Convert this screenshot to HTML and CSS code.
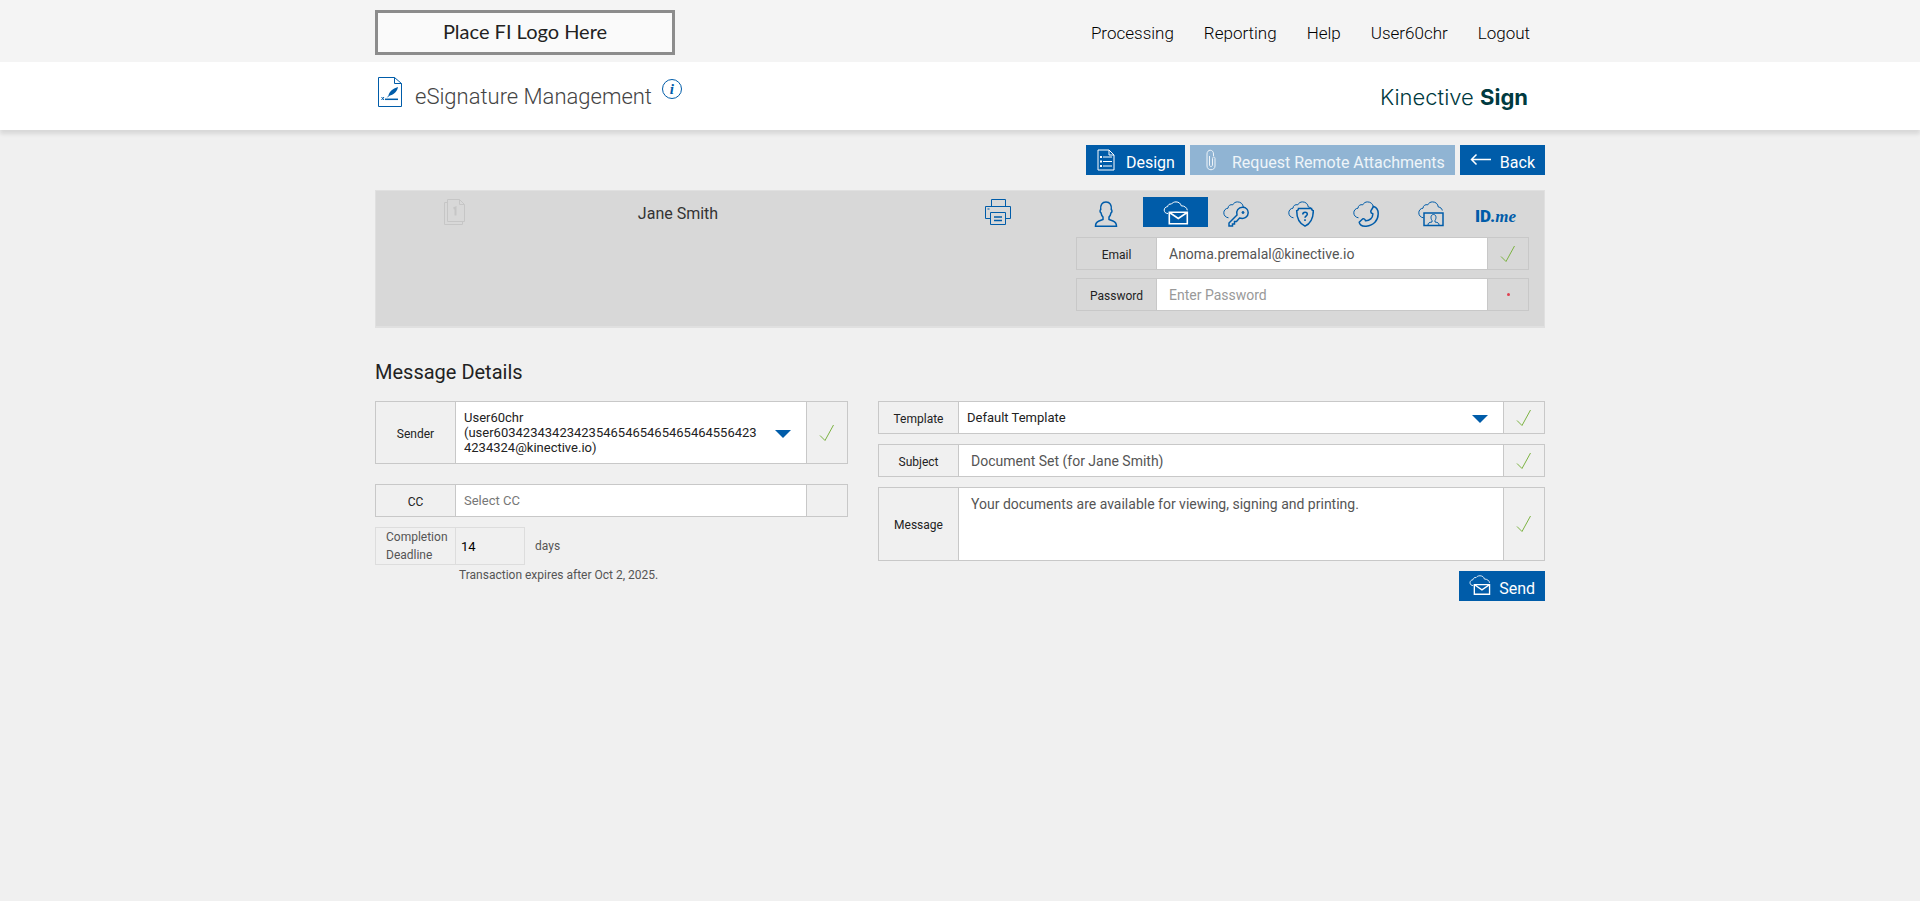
FILE: index.html
```html
<!DOCTYPE html>
<html lang="en">

<head>
  <meta charset="UTF-8">
  <meta name="viewport" content="width=device-width, initial-scale=1.0">
  <title>eSignature Management</title>
  <link rel="stylesheet" href="styles.css">
</head>

<body>
  <!-- Shared icons -->
  <svg class="icon-defs" aria-hidden="true">
    <symbol id="icon-cloud" viewBox="0 0 26 26">
      <path d="M5.500 16.800C2.800 16.500.8 14.500.8 11.800c0-2.500 1.800-4.400 4.200-4.600C5.200 4.500 7.300 3.200 9.800 3.800 10.800 1.800 12.500.9 14.500.9c3.200 0 5.400 2 5.800 5.100 2.300.3 3.600 1.500 4 3.500" />
    </symbol>
    <symbol id="icon-mail" viewBox="0 0 26 26">
      <path d="M5 12.500C2.800 12.500 1.200 11.200 1.200 9.200c0-2 1.400-3.400 3.500-3.600C5 3.500 6.500 2.700 8.300 3.100 9.500 1.600 11 .9 13 .9c2.700 0 4.700 1.500 5.200 3.900C21.400 4.800 24 6.500 24.300 9.300" />
      <path stroke-width="1.600" d="M6.300 11.300h18v11.400h-18zM6.500 11.500l8.800 6 8.800-6" />
    </symbol>
    <symbol id="icon-check" viewBox="0 0 16 18">
      <path d="M1 11.500l5 5L14.500 1" />
    </symbol>
  </svg>

  <header class="top-bar">
    <div class="container top-inner">
      <div class="fi-logo">Place FI Logo Here</div>
      <nav class="main-nav">
        <a href="#">Processing</a>
        <a href="#">Reporting</a>
        <a href="#">Help</a>
        <a href="#">User60chr</a>
        <a href="#">Logout</a>
      </nav>
    </div>
  </header>

  <div class="title-bar">
    <div class="container title-inner">
      <svg class="title-icon" viewBox="0 0 24 30">
        <path d="M.5.500h16l7 6v23H.5zM16.500.500v6h7" />
        <path d="M3.500 20l2.500 3M6 20l-2.500 3" />
        <path stroke-width="1.500" d="M7 22.300h13" />
        <path class="feather" d="M10.500 18.500C11 15 14.500 11.500 20 10c-.5 3.500-3.500 7.500-8 8.500L8.500 21z" />
      </svg>
      <h1>eSignature Management</h1>
      <a class="info-link" href="#" aria-label="Information">i</a>
      <div class="brand">Kinective <strong>Sign</strong></div>
    </div>
  </div>

  <main class="container">
    <div class="actions">
      <button class="btn" type="button">
        <svg class="btn-icon design-icon" viewBox="0 0 18 22">
          <path d="M1 1h11l5 5v15H1zM12 1v5h5M6 8h9M6 12.500h9M6 17h9" />
          <path stroke-width="2" d="M3 8h2M3 12.500h2M3 17h2" />
        </svg>
        Design
      </button>
      <button class="btn" type="button" disabled>
        <svg class="btn-icon clip-icon" viewBox="0 0 10 22">
          <path d="M3.500 7v9c0 2 3 2 3 0V9.500c0-2 2.500-2 2.500 0V17c0 5-8 5-8 0V5c0-5 6.500-5 6.500 0v2" />
        </svg>
        Request Remote Attachments
      </button>
      <button class="btn btn-compact" type="button">
        <svg class="btn-icon back-icon" viewBox="0 0 22 22">
          <path stroke-width="1.500" d="M21 10.500H1.500M6.500 5.500l-5 5 5 5" />
        </svg>
        Back
      </button>
    </div>

    <section class="signer-panel">
      <div class="cell doc-cell">
        <svg class="doc-icon" viewBox="0 0 22 26">
          <path d="M3.500.500h12l5 5v17h-17zM15.500.500v5h5M3.500 3.500h-3v22h18v-3" />
          <path stroke-width="2" d="M9.500 9.500l2-1v8" />
        </svg>
      </div>
      <div class="cell signer-name">Jane Smith</div>
      <div class="cell print-cell">
        <button class="icon-btn" type="button" aria-label="Print">
          <svg class="icon" viewBox="0 0 26 26">
            <path d="M6.500 7.500v-7h14v7M5.500 19.500h-5v-12h25v12h-5M5.500 13.500h15v12h-15z" />
            <path stroke-width="1.500" d="M9 18h8M9 21.500h8" />
            <path d="M2.500 10h2" />
          </svg>
        </button>
      </div>
      <div class="auth">
        <div class="auth-tabs">
          <button class="tab" type="button" aria-label="In person">
            <svg class="icon" viewBox="0 0 26 26">
              <path stroke-width="1.500" d="M2.500 25.200h21c0-3.200-.8-4.200-3.500-5.200l-4-1.500v-2.500c1.200-1.200 1.700-2.500 2-4.200 1.200-.6 1.200-2.800.3-3.200C18.800 4 17 1 13 1S7.200 4 7.700 8.600c-.9.400-.9 2.600.3 3.200.3 1.700.8 3 2 4.200v2.500L6 20c-2.700 1-3.500 2-3.500 5.200z" />
            </svg>
          </button>
          <button class="tab active" type="button" aria-label="Email">
            <svg class="icon"><use href="#icon-mail" /></svg>
          </button>
          <button class="tab" type="button" aria-label="Password">
            <svg class="icon" viewBox="0 0 26 26">
              <use href="#icon-cloud" />
              <path class="masked" stroke-width="1.500" d="M14 14L6 22v3h3.500v-2h2v-2.500h2l3-3.500c5 1.500 8.700-1.200 8.700-5.200 0-3.500-2.500-5.500-5.700-5.500-4.200 0-6.800 3.700-5.500 7.700z" />
              <circle class="solid" cx="20" cy="11.500" r="1" />
            </svg>
          </button>
          <button class="tab" type="button" aria-label="Security question">
            <svg class="icon" viewBox="0 0 26 26">
              <use href="#icon-cloud" />
              <path class="masked" stroke-width="1.500" d="M10.500 7.500h13c0 1.300.7 2 1.800 2.200 0 7.500-1.800 12.300-8.300 15.500-6.500-3.200-8.300-8-8.300-15.500 1.100-.2 1.800-.9 1.800-2.200z" />
              <path stroke-width="1.600" d="M14.800 13.500c0-3 4.500-3 4.500-.3 0 1.600-2.300 1.600-2.300 3.600M17 18.300v1.800" />
            </svg>
          </button>
          <button class="tab" type="button" aria-label="Phone">
            <svg class="icon" viewBox="0 0 26 26">
              <use href="#icon-cloud" />
              <path class="masked" stroke-width="1.500" d="M20.500 5.500c3.500 1 4.800 3.500 4.700 7.500-.2 6.500-4.500 11.500-12 12.200-4 .3-6.500-.7-7-4L9.500 18c1.500-.8 2.500.2 3 1.800 4 .2 7.500-3 7.300-7-1.600-.6-2.300-1.800-1.800-3.200z" />
            </svg>
          </button>
          <button class="tab" type="button" aria-label="Identification">
            <svg class="icon" viewBox="0 0 26 26">
              <use href="#icon-cloud" />
              <path class="masked" stroke-width="1.500" d="M6 12h19v12.500H6z" />
              <path d="M10 24c0-2 1-2.500 4-3v-1.500c-1.500-2-1.500-6 1.500-6s3 4 1.500 6V21c3 .5 4 1 4 3" />
            </svg>
          </button>
          <button class="tab" type="button" aria-label="ID.me">
            <span class="idme">ID.<em>me</em></span>
          </button>
        </div>
        <div class="field">
          <label for="email">Email</label>
          <input id="email" type="text" value="Anoma.premalal@kinective.io">
          <span class="status"><svg class="check"><use href="#icon-check" /></svg></span>
        </div>
        <div class="field">
          <label for="password">Password</label>
          <input id="password" type="password" placeholder="Enter Password">
          <span class="status"><span class="required-dot"></span></span>
        </div>
      </div>
    </section>

    <h2>Message Details</h2>

    <form class="details">
      <div class="details-left">
        <div class="field sender-field">
          <label for="sender">Sender</label>
          <div class="select-wrap">
            <select id="sender">
              <option>User60chr (user6034234342342354654654654654645564234234324@kinective.io)</option>
            </select>
          </div>
          <span class="status"><svg class="check"><use href="#icon-check" /></svg></span>
        </div>
        <div class="field cc-field">
          <label for="cc">CC</label>
          <input id="cc" type="text" placeholder="Select CC">
          <span class="status"></span>
        </div>
        <div class="deadline">
          <div class="deadline-box">
            <label for="days">Completion Deadline</label>
            <input id="days" type="text" value="14">
          </div>
          <span>days</span>
        </div>
        <p class="expires">Transaction expires after Oct 2, 2025.</p>
      </div>

      <div class="details-right">
        <div class="field">
          <label for="template">Template</label>
          <div class="select-wrap">
            <select id="template">
              <option>Default Template</option>
            </select>
          </div>
          <span class="status"><svg class="check"><use href="#icon-check" /></svg></span>
        </div>
        <div class="field">
          <label for="subject">Subject</label>
          <input id="subject" type="text" value="Document Set (for Jane Smith)">
          <span class="status"><svg class="check"><use href="#icon-check" /></svg></span>
        </div>
        <div class="field message-field">
          <label for="message">Message</label>
          <textarea id="message">Your documents are available for viewing, signing and printing.</textarea>
          <span class="status"><svg class="check"><use href="#icon-check" /></svg></span>
        </div>
        <button class="btn btn-compact send-btn" type="button">
          <svg class="btn-icon send-icon"><use href="#icon-mail" /></svg>
          Send
        </button>
      </div>
    </form>
  </main>
</body>

</html>
```

FILE: styles.css
```css
:root {
  --primary: #005ca9;
  --background: #f0f0f0;
  --panel: #d8d8d8;
  --border: #c8c8c8;
  --text: #222;
  --text-secondary: #555;
  --brand: #003a40;
  --success: #7cb342;
}

* {
  box-sizing: border-box;
  margin: 0;
  padding: 0;
}

body {
  font-family: Roboto, "Liberation Sans", sans-serif;
  font-size: 14px;
  line-height: 20px;
  background: var(--background);
  color: var(--text);
}

button,
input,
select,
textarea {
  font-family: inherit;
}

svg {
  fill: none;
  stroke: currentColor;
}

.solid,
.feather {
  fill: currentColor;
}

.feather {
  stroke: none;
}

.icon-defs {
  display: none;
}

.container {
  max-width: 1170px;
  margin: 0 auto;
}

/* Header */
.top-bar {
  background: #f4f4f4;
}

.top-inner {
  display: flex;
  align-items: center;
  justify-content: space-between;
  padding: 10px 0 7px;
}

.fi-logo {
  width: 300px;
  height: 45px;
  border: 3px solid #8c8c8c;
  background: #fafafa;
  color: #222;
  font-family: Lato, sans-serif;
  font-size: 20px;
  line-height: 36px;
  text-align: center;
}

.main-nav {
  display: flex;
  gap: 30px;
  padding-right: 15px;
}

.main-nav a {
  color: #000;
  font-size: 17px;
  font-weight: 300;
  text-decoration: none;
}

.title-bar {
  background: #fff;
  box-shadow: 0 4px 4px rgba(0, 0, 0, 0.1);
}

.title-inner {
  display: flex;
  align-items: flex-start;
  height: 68px;
  padding: 15px 17px 0 3px;
}

.title-icon {
  width: 24px;
  height: 30px;
  color: var(--primary);
}

h1 {
  margin: 4px 10px 0 13px;
  color: #444;
  font-size: 22px;
  font-weight: 300;
  line-height: 32px;
}

.info-link {
  width: 20px;
  height: 20px;
  margin-top: 2px;
  border: 1px solid var(--primary);
  border-radius: 50%;
  color: var(--primary);
  font-family: "Liberation Serif", serif;
  font-size: 15px;
  font-style: italic;
  font-weight: 700;
  line-height: 18px;
  text-align: center;
  text-decoration: none;
}

.brand {
  margin: 4px 0 0 auto;
  color: var(--brand);
  font-family: Inter, sans-serif;
  font-size: 22px;
  font-weight: 300;
  line-height: 32px;
}

.brand strong {
  font-weight: 700;
}

/* Buttons */
.actions {
  display: flex;
  justify-content: flex-end;
  gap: 5px;
  padding: 15px 0;
}

.btn {
  display: flex;
  align-items: flex-start;
  gap: 10px;
  height: 30px;
  padding: 4px 10px 0;
  border: 0;
  background: var(--primary);
  color: #fff;
  font-size: 16px;
  line-height: 28px;
  cursor: pointer;
}

.btn-compact {
  gap: 8px;
}

.btn:disabled {
  background: #90b4d3;
  color: #eef4f9;
  cursor: default;
}

.btn-icon {
  height: 22px;
}

.design-icon {
  width: 20px;
}

.clip-icon,
.back-icon,
.send-icon {
  width: 22px;
}

/* Signer */
.signer-panel {
  display: grid;
  grid-template-columns: 157fr 290fr 96fr 157fr 453px;
  padding: 6px 15px 15px 0;
  border: 1px solid #e0e0e0;
  border-bottom-width: 2px;
  background: var(--panel);
}

.cell {
  display: flex;
  justify-content: center;
  padding-top: 2px;
}

.doc-icon {
  width: 22px;
  height: 26px;
  color: #c6c6c6;
}

.signer-name {
  padding-top: 7px;
  color: #333;
  font-size: 16px;
}

.print-cell {
  grid-column: 4;
}

.icon-btn {
  height: 26px;
  border: 0;
  background: none;
  color: var(--primary);
  cursor: pointer;
}

.icon {
  width: 26px;
  height: 26px;
}

.auth {
  display: grid;
  grid-column: 5;
  gap: 8px;
}

.auth-tabs {
  display: grid;
  grid-template-columns: repeat(7, 1fr);
  padding-left: 2px;
  margin: 0 -4px 2px 0;
}

.tab {
  display: flex;
  align-items: flex-start;
  justify-content: center;
  height: 30px;
  padding: 4px 10px 0 0;
  border: 0;
  background: none;
  color: var(--primary);
  cursor: pointer;
}

.tab.active {
  padding-right: 0;
  background: var(--primary);
  color: #fff;
}

.masked {
  fill: var(--panel);
}

.idme {
  font-size: 17px;
  font-weight: 900;
  line-height: 30px;
}

.idme em {
  font-family: "Liberation Serif", serif;
  font-weight: 700;
}

/* Form fields */
.field {
  display: grid;
  grid-template-columns: 79px 1fr 40px;
  min-height: 33px;
  border: 1px solid var(--border);
}

.field > label {
  display: flex;
  align-items: center;
  justify-content: center;
  padding-top: 2px;
  font-size: 12px;
}

.field > input,
.field > textarea,
.select-wrap {
  min-width: 0;
  border: solid var(--border);
  border-width: 0 1px;
  background: #fff;
}

.field > input,
.field > textarea {
  padding: 0 12px;
  border-radius: 0;
  color: var(--text-secondary);
  font-size: 14px;
  outline: none;
}

.field > textarea {
  display: block;
  width: 100%;
  height: 72px;
  padding-top: 6px;
  line-height: 20px;
  resize: none;
}

::placeholder {
  color: #999;
  opacity: 1;
}

.status {
  display: flex;
  align-items: center;
  justify-content: center;
}

.check {
  width: 16px;
  height: 18px;
  color: var(--success);
}

.required-dot {
  width: 3px;
  height: 3px;
  border-radius: 50%;
  background: #e04050;
}

.select-wrap {
  position: relative;
  display: flex;
  align-items: center;
}

.select-wrap::after {
  content: '';
  position: absolute;
  top: 50%;
  right: 15px;
  margin-top: -3px;
  border: 8px solid transparent;
  border-top-color: var(--primary);
  border-bottom: 0;
  pointer-events: none;
}

select {
  width: 100%;
  padding: 0 46px 0 8px;
  border: 0;
  background: none;
  color: var(--text);
  font-size: 13px;
  line-height: 15px;
  white-space: normal;
  overflow-wrap: anywhere;
  appearance: none;
  outline: none;
}

/* Message details */
h2 {
  margin: 31px 0 16px;
  font-size: 20px;
  font-weight: 400;
  line-height: 26px;
}

.details {
  display: grid;
  grid-template-columns: 473fr 667fr;
  align-items: start;
  gap: 30px;
}

.sender-field {
  min-height: 63px;
}

.cc-field {
  margin: 20px 0 10px;
}

.cc-field > input {
  padding: 0 8px;
  font-size: 13px;
}

.cc-field ::placeholder {
  color: #777;
}

.deadline {
  display: flex;
  align-items: center;
  gap: 10px;
  color: var(--text-secondary);
  font-size: 12px;
}

.deadline-box {
  display: grid;
  grid-template-columns: 79px 69px;
  border: 1px solid #ddd;
}

.deadline-box label {
  padding-left: 10px;
  line-height: 18px;
}

.deadline-box input {
  min-width: 0;
  padding: 0 5px;
  border: 0;
  border-left: 1px solid #ddd;
  background: none;
  color: #000;
  font-size: 13px;
}

.expires {
  padding-left: 84px;
  color: var(--text-secondary);
  font-size: 12px;
}

.details-right {
  display: grid;
  gap: 10px;
}

.send-btn {
  justify-self: end;
}
```
